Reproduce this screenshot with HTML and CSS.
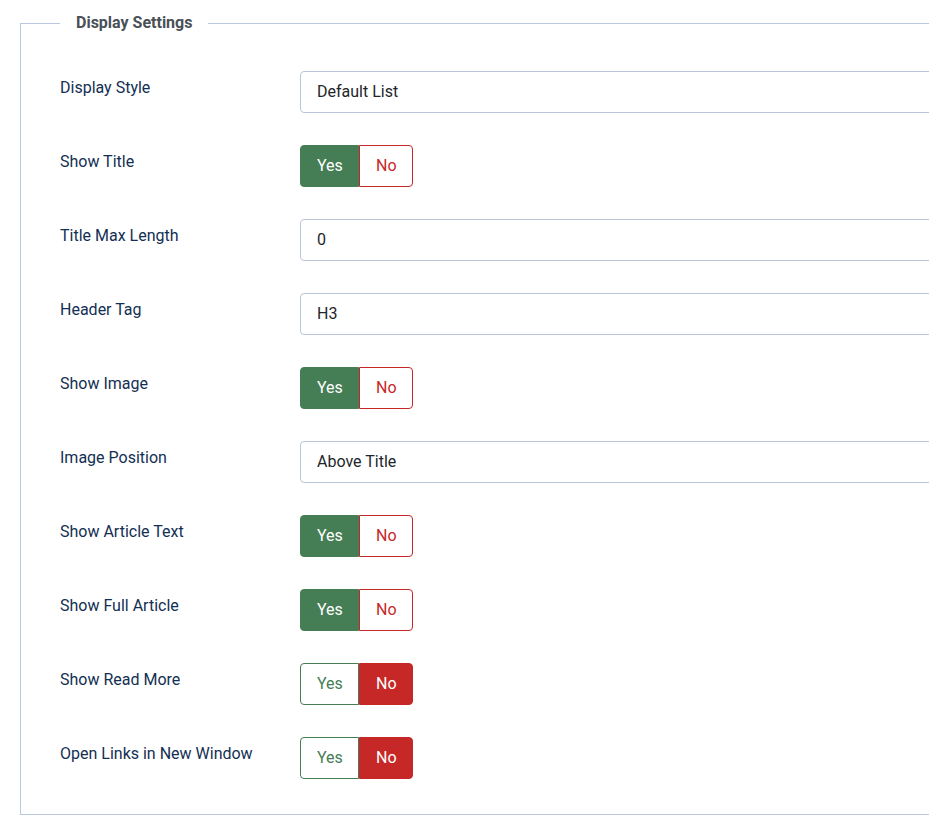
FILE: index.html
```html
<!DOCTYPE html>
<html lang="en">
<head>
    <meta charset="UTF-8">
    <meta name="viewport" content="width=device-width, initial-scale=1.0">
    <title>Display Settings</title>
    <link rel="stylesheet" href="styles.css">
</head>
<body>
    <fieldset class="options">
        <legend>Display Settings</legend>

        <div class="row">
            <label for="displayStyle">Display Style</label>
            <div class="control"><div class="field" id="displayStyle">Default List</div></div>
        </div>

        <div class="row">
            <label>Show Title</label>
            <div class="control">
                <div class="switch"><span class="yes on">Yes</span><span class="no">No</span></div>
            </div>
        </div>

        <div class="row">
            <label for="titleMax">Title Max Length</label>
            <div class="control"><div class="field" id="titleMax">0</div></div>
        </div>

        <div class="row">
            <label for="headerTag">Header Tag</label>
            <div class="control"><div class="field" id="headerTag">H3</div></div>
        </div>

        <div class="row">
            <label>Show Image</label>
            <div class="control">
                <div class="switch"><span class="yes on">Yes</span><span class="no">No</span></div>
            </div>
        </div>

        <div class="row">
            <label for="imagePos">Image Position</label>
            <div class="control"><div class="field" id="imagePos">Above Title</div></div>
        </div>

        <div class="row">
            <label>Show Article Text</label>
            <div class="control">
                <div class="switch"><span class="yes on">Yes</span><span class="no">No</span></div>
            </div>
        </div>

        <div class="row">
            <label>Show Full Article</label>
            <div class="control">
                <div class="switch"><span class="yes on">Yes</span><span class="no">No</span></div>
            </div>
        </div>

        <div class="row">
            <label>Show Read More</label>
            <div class="control">
                <div class="switch"><span class="yes">Yes</span><span class="no on">No</span></div>
            </div>
        </div>

        <div class="row">
            <label>Open Links in New Window</label>
            <div class="control">
                <div class="switch"><span class="yes">Yes</span><span class="no on">No</span></div>
            </div>
        </div>
    </fieldset>
</body>
</html>
```

FILE: styles.css
```css
html {
    overflow: hidden;
}

body {
    margin: 0;
    font-family: Roboto, "Liberation Sans", Arial, sans-serif;
    font-size: 16px;
    color: #22262a;
    background-color: #fff;
}

.options {
    width: 1000px;
    margin: 11px 0 0 20px;
    padding: 36px 39px 35px 39px;
    border: 1px solid #b9c8de;
    border-right: none;
    box-sizing: border-box;
}

.options legend {
    padding: 0 16px;
    font-weight: 700;
    font-size: 16px;
    line-height: 24px;
    color: #495057;
}

.row {
    display: flex;
    margin-bottom: 32px;
}

.row:last-child {
    margin-bottom: 0;
}

.row label {
    width: 240px;
    flex: none;
    padding-top: 5px;
    line-height: 24px;
    color: #132f53;
}

.control {
    flex: 1;
}

.field {
    height: 42px;
    box-sizing: border-box;
    padding: 0 16px;
    line-height: 40px;
    border: 1px solid #b9c6da;
    border-radius: 4px;
    color: #22262a;
}

.switch {
    display: flex;
    height: 42px;
}

.switch span {
    display: block;
    box-sizing: border-box;
    padding: 0 16px;
    line-height: 40px;
    border: 1px solid;
}

.switch .yes {
    width: 59px;
    text-align: center;
    border-color: #457d54;
    color: #457d54;
    border-radius: 4px 0 0 4px;
}

.switch .no {
    width: 54px;
    text-align: center;
    border-color: #c52827;
    color: #c52827;
    border-radius: 0 4px 4px 0;
}

.switch .yes.on {
    background-color: #457d54;
    color: #fff;
}

.switch .no.on {
    background-color: #c52827;
    color: #fff;
}
```
